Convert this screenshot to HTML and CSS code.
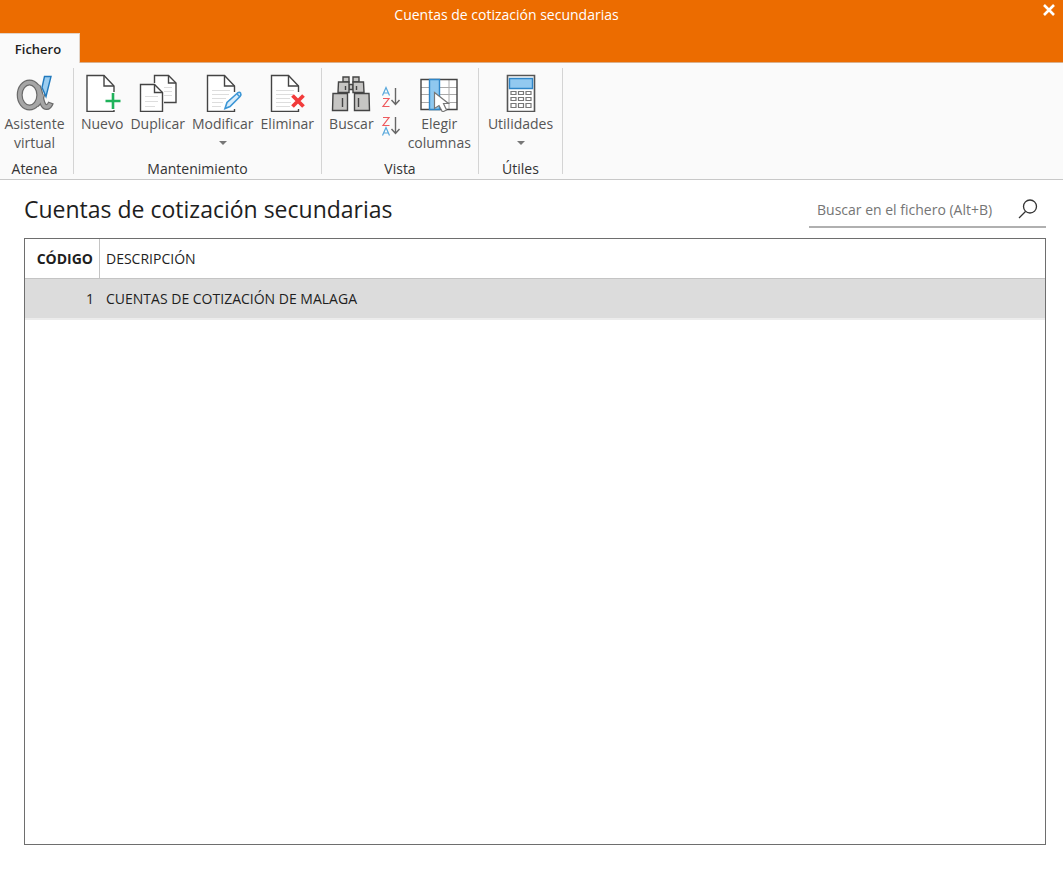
FILE: index.html
```html
<!DOCTYPE html>
<html lang="es">
<head>
<meta charset="utf-8">
<meta name="viewport" content="width=device-width, initial-scale=1">
<title>Cuentas de cotización secundarias</title>
<link rel="stylesheet" href="styles.css">
</head>
<body>
<div class="window">
  <header class="titlebar">
    <div class="caption">
      <span class="caption-text">Cuentas de cotización secundarias</span>
      <button class="close" type="button" aria-label="Cerrar">
        <svg width="14" height="14" viewBox="0 0 14 14"><path d="M2 2l10 10M12 2L2 12" stroke="#fff" stroke-width="2.6" fill="none"/></svg>
      </button>
    </div>
    <nav class="tabs"><button class="tab" type="button">Fichero</button></nav>
  </header>

  <div class="ribbon">
    <section class="group group-atenea">
      <div class="tools">
        <button class="tool" type="button">
          <svg class="icon" width="40" height="40" viewBox="0 0 40 40">
            <g fill="none" stroke="#6a6a6a" stroke-width="6">
              <ellipse cx="14.500" cy="23" rx="9.800" ry="12.500"/>
              <path d="M22.500 14c3 5 3 12 5 17 1.500 4.500 6 6.500 8.500-.5"/>
              <path d="M28.500 22c-1.500 5-3.500 9-6.500 11.500" stroke-width="4"/>
            </g>
            <g fill="none" stroke="#a6a6a6" stroke-width="3.600">
              <ellipse cx="14.500" cy="23" rx="9.800" ry="12.500"/>
              <path d="M22.500 14c3 5 3 12 5 17 1.500 4.500 5.500 6 8 .5"/>
              <path d="M28.500 22c-1.500 5-3.500 9-6.500 11.500" stroke-width="1.600"/>
            </g>
            <path d="M29.500 4.500h6.500L31 24.500l-4-9z" fill="#9bcdf0" stroke="#2079bd" stroke-width="1.400"/>
          </svg>
          <span>Asistente<br>virtual</span>
        </button>
      </div>
      <h2 class="group-name">Atenea</h2>
    </section>

    <section class="group group-mantenimiento">
      <div class="tools">
        <button class="tool" type="button">
          <svg class="icon" width="40" height="40" viewBox="0 0 40 40">
            <path d="M32 20v-6L22 3.500H5v36h27V38" fill="#fff" stroke="#444" stroke-width="1.400"/>
            <path d="M22 3.500v10.500h10" fill="none" stroke="#444" stroke-width="1.400"/>
            <path d="M31 21v16M23.500 29h15" stroke="#1fb25a" stroke-width="2.600"/>
          </svg>
          <span>Nuevo</span>
        </button>
        <button class="tool" type="button">
          <svg class="icon" width="40" height="40" viewBox="0 0 40 40">
            <path d="M16.500 11V3.500h14L38 11v19.500H26" fill="#fff" stroke="#444" stroke-width="1.400"/>
            <path d="M30.500 3.500V11H38" fill="none" stroke="#444" stroke-width="1.400"/>
            <path d="M26 15.500h8M26 19.500h8M26 23.500h8" stroke="#ddd"/>
            <path d="M2.500 12.500h14l8 8v19h-22z" fill="#fff" stroke="#444" stroke-width="1.400"/>
            <path d="M16.500 12.500v8h8" fill="none" stroke="#444" stroke-width="1.400"/>
            <path d="M7 24.500h13M7 29.500h13M7 34.500h10" stroke="#ddd"/>
          </svg>
          <span>Duplicar</span>
        </button>
        <button class="tool" type="button">
          <svg class="icon" width="40" height="40" viewBox="0 0 40 40">
            <path d="M31.500 20v-6L21.500 3.500h-17v36h27V37" fill="#fff" stroke="#444" stroke-width="1.400"/>
            <path d="M21.500 3.500v10.500h10" fill="none" stroke="#444" stroke-width="1.400"/>
            <path d="M9 18.500h18M9 22.500h17M9 26.500h14M9 30.500h11M9 34.500h9" stroke="#ddd"/>
            <path d="M22 36.500l2-6L34.500 21q2-1.500 3 0t-.5 3.500L27 34.500z" fill="#d9edfb" stroke="#3c96d6" stroke-width="1.600"/>
            <path d="M34 22l3 3" stroke="#3c96d6" stroke-width="1.400"/>
          </svg>
          <span>Modificar</span>
          <i class="arrow"></i>
        </button>
        <button class="tool" type="button">
          <svg class="icon" width="40" height="40" viewBox="0 0 40 40">
            <path d="M31.500 20v-6L21.500 3.500h-17v36h27V37" fill="#fff" stroke="#444" stroke-width="1.400"/>
            <path d="M21.500 3.500v10.500h10" fill="none" stroke="#444" stroke-width="1.400"/>
            <path d="M9 18.500h18M9 22.500h17M9 26.500h14M9 30.500h15M9 34.500h14" stroke="#ddd"/>
            <path d="M25.500 23.500l11 11M36.500 23.500l-11 11" stroke="#f23b3b" stroke-width="3.800"/>
          </svg>
          <span>Eliminar</span>
        </button>
      </div>
      <h2 class="group-name">Mantenimiento</h2>
    </section>

    <section class="group group-vista">
      <div class="tools">
        <button class="tool" type="button">
          <svg class="icon" width="40" height="40" viewBox="0 0 40 40">
            <g fill="#c6c5c3" stroke="#444" stroke-width="1.400">
              <path d="M12 5h6v5h-6zM22 5h6v5h-6zM18 12.500h4v5h-4z"/>
              <path d="M7.500 10h10.500v10.500H7zM22 10h10.500l.5 10.500H22z"/>
              <path d="M2 21.500h14.500v17h-15zM23.500 21.500H38l.5 17h-15z"/>
            </g>
            <path d="M14.500 14v4M25.500 14v4M11.500 26v9M27.500 26v9" stroke="#444" stroke-width="1.400"/>
          </svg>
          <span>Buscar</span>
        </button>
        <div class="sorts">
          <button class="sort" type="button" aria-label="Orden ascendente">
            <svg width="20" height="22" viewBox="0 0 20 22" fill="none">
              <path d="M1.500 9.500L5 1.500l3.500 8M2.500 7h5" stroke="#58a8dc" stroke-width="1.200"/>
              <path d="M2 12.500h6l-6 8h6.500" stroke="#ee5a5e" stroke-width="1.200"/>
              <path d="M14.500 2v16M10.500 14l4 4.500 4-4.500" stroke="#666" stroke-width="1.400"/>
            </svg>
          </button>
          <button class="sort" type="button" aria-label="Orden descendente">
            <svg width="20" height="22" viewBox="0 0 20 22" fill="none">
              <path d="M2 2.500h6l-6 8h6.500" stroke="#ee5a5e" stroke-width="1.200"/>
              <path d="M1.500 20.500L5 12.500l3.500 8M2.500 18h5" stroke="#58a8dc" stroke-width="1.200"/>
              <path d="M14.500 2v16M10.500 14l4 4.500 4-4.500" stroke="#666" stroke-width="1.400"/>
            </svg>
          </button>
        </div>
        <button class="tool" type="button">
          <svg class="icon" width="40" height="40" viewBox="0 0 40 40">
            <path d="M2 7.500h36v30H2z" fill="#fff"/>
            <path d="M2 15.500h36M2 22.500h36M2 30.500h36M20 7v31M30 7v31" stroke="#aaa"/>
            <path d="M2 7.500h36v30H2z" fill="none" stroke="#444" stroke-width="1.400"/>
            <path d="M10.500 7.500h10v30h-10z" fill="#8fc8ef" stroke="#2f86c8" stroke-width="1.400"/>
            <path d="M15.500 20.500v16l4.500-3 3.500 6.500 4-2-3-6.500h5z" fill="#fff" stroke="#777" stroke-width="1.200"/>
          </svg>
          <span>Elegir<br>columnas</span>
        </button>
      </div>
      <h2 class="group-name">Vista</h2>
    </section>

    <section class="group group-utiles">
      <div class="tools">
        <button class="tool" type="button">
          <svg class="icon" width="40" height="40" viewBox="0 0 40 40">
            <path d="M6.500 3.500h27v36h-27z" fill="#fff" stroke="#555" stroke-width="1.600"/>
            <path d="M8.500 6.500h23v10h-23z" fill="#92c9f0" stroke="#2f86c8" stroke-width="1.400"/>
            <path d="M10 19.500h5v3h-5zM17.500 19.500h5v3h-5zM25 19.500h5v3h-5zM10 25.500h5v3h-5zM17.500 25.500h5v3h-5zM25 25.500h5v3h-5zM10 31.500h5v4h-5zM17.500 31.500h5v4h-5zM25 31.500h5v4h-5z" fill="#fff" stroke="#777" stroke-width="1.200"/>
          </svg>
          <span>Utilidades</span>
          <i class="arrow"></i>
        </button>
      </div>
      <h2 class="group-name">Útiles</h2>
    </section>
  </div>

  <main class="content">
    <div class="heading">
      <h1>Cuentas de cotización secundarias</h1>
      <form class="search">
        <input type="text" aria-label="Buscar en el fichero" placeholder="Buscar en el fichero (Alt+B)">
        <button type="button" aria-label="Buscar en el fichero">
          <svg width="20" height="20" viewBox="0 0 20 20"><circle cx="12" cy="7.500" r="6.500" fill="none" stroke="#333" stroke-width="1.300"/><path d="M7.500 12.500L1 19" stroke="#333" stroke-width="1.300"/></svg>
        </button>
      </form>
    </div>
    <div class="grid">
      <table>
        <thead><tr><th class="code" scope="col">CÓDIGO</th><th scope="col">DESCRIPCIÓN</th></tr></thead>
        <tbody><tr><td class="code">1</td><td>CUENTAS DE COTIZACIÓN DE MALAGA</td></tr></tbody>
      </table>
    </div>
  </main>
</div>
</body>
</html>
```
FILE: styles.css
```css
* { box-sizing: border-box; }

body {
  margin: 0;
  background: #fff;
  color: #1e1e1e;
  font-family: "Open Sans", "Noto Sans", sans-serif;
  font-size: 14px;
}

button {
  padding: 0;
  border: 0;
  background: none;
  color: inherit;
  font: inherit;
}

svg { display: block; }

.window {
  display: flex;
  flex-direction: column;
  min-height: 100vh;
}

.titlebar {
  background: #ec6c00;
  border-bottom: 1px solid #d9b08c;
}

.caption {
  display: grid;
  grid-template-columns: 50px 1fr 50px;
  height: 33px;
}

.caption-text {
  grid-column: 2;
  justify-self: center;
  padding-right: 50px;
  color: #fff;
  line-height: 30px;
}

.close {
  align-self: start;
  justify-self: end;
  padding: 3px 7px;
}

.tabs {
  display: flex;
  margin-bottom: -1px;
}

.tab {
  width: 80px;
  height: 30px;
  padding-right: 3px;
  border-top: 1px solid #e3d3c5;
  border-right: 1px solid #e3d3c5;
  background: #fafafa;
  font-size: 13px;
  font-weight: 600;
}

.ribbon {
  display: flex;
  height: 117px;
  padding: 5px 0;
  border-bottom: 1px solid #c8c8c8;
  background: #fafafa;
}

.group {
  display: flex;
  flex-direction: column;
  justify-content: space-between;
  border-right: 1px solid #d4d4d4;
}

.group-atenea { width: 74px; padding-right: 4px; }
.group-mantenimiento { width: 248px; }
.group-vista { width: 157px; }
.group-utiles { width: 84px; }

.tools {
  display: flex;
  justify-content: center;
  gap: 7px;
}

.tool {
  display: flex;
  flex-direction: column;
  align-items: center;
  padding-top: 4px;
  color: #555;
  line-height: 19px;
}

.icon {
  margin-bottom: 2px;
}

.arrow {
  margin-top: 8px;
  border: 4px solid transparent;
  border-top-color: #777;
  border-bottom: 0;
}

.sorts {
  display: flex;
  flex-direction: column;
  gap: 7px;
  padding-top: 18px;
}

.group-name {
  margin: 0;
  color: #333;
  font-size: 14px;
  font-weight: 400;
  line-height: 10px;
  text-align: center;
}

.content {
  display: flex;
  flex: 1;
  flex-direction: column;
  padding: 0 17px 31px 24px;
}

.heading {
  display: flex;
  align-items: flex-start;
  justify-content: space-between;
  height: 58px;
}

h1 {
  margin: 0;
  font-size: 23px;
  font-weight: 400;
  line-height: 58px;
}

.search {
  display: flex;
  align-items: center;
  width: 237px;
  height: 36px;
  margin-top: 12px;
  padding: 0 8px;
  border-bottom: 2px solid #b0b0b0;
}

.search input {
  flex: 1;
  min-width: 0;
  padding: 0;
  border: 0;
  outline: 0;
  background: none;
  font: inherit;
}

.search input::placeholder { color: #757575; }

.grid {
  flex: 1;
  border: 1px solid #6e6e6e;
}

table {
  width: 100%;
  border-spacing: 0;
  table-layout: fixed;
}

th, td {
  height: 40px;
  padding: 0 6px;
  font-weight: 400;
  text-align: left;
}

th { border-bottom: 1px solid #c4c4c4; }
th.code { border-right: 1px solid #c4c4c4; font-weight: 700; }
.code { width: 75px; text-align: right; }

td {
  height: 41px;
  border-bottom: 2px solid #ececec;
  background: #dcdcdc;
}
```
